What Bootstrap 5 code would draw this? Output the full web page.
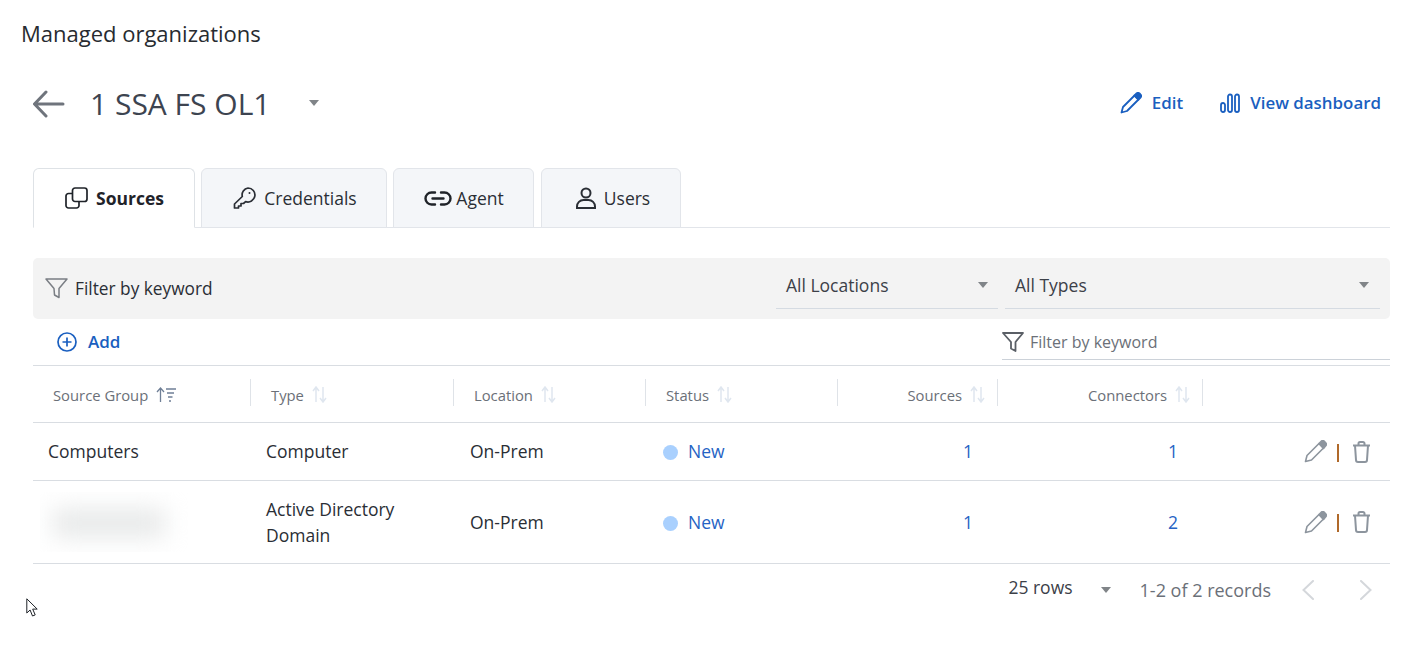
<!DOCTYPE html>
<html lang="en">
<head>
<meta charset="utf-8">
<title>Managed organizations</title>
<link href="https://cdn.jsdelivr.net/npm/bootstrap@5.3.0/dist/css/bootstrap.min.css" rel="stylesheet">
<style>
html,body{height:655px;overflow:hidden;background:#fff}
body{font-family:"Open Sans","Noto Sans",sans-serif;color:#2a2e35;font-size:17.5px;position:relative}
.page-head{font-size:22px;line-height:30px;padding:18px 0 0 21px;color:#272b30}
.wrap{padding:0 35px 0 33px}
.org-bar{height:60px;margin-top:26px}
.org-name{font-size:30px;line-height:40px;color:#3d4450;margin-left:25px}
.tri{width:0;height:0;border-left:5.5px solid transparent;border-right:5.5px solid transparent;border-top:6px solid #808488;display:inline-block}
.org-tri{margin-left:39px;margin-bottom:3px}
.act{color:#1a5fc0;font-weight:600;font-size:16.9px;text-decoration:none;line-height:24px}
.act-edit{margin-left:10px}
.act-view{margin-left:10px}
.act-chart{margin-left:37px}
.act-box{padding-right:9px;padding-bottom:2px}
.tabs-x{margin-top:34px;height:60px;gap:6px;border-bottom:1px solid #e2e5ea;flex-wrap:nowrap}
.tabs-x .nav-link{height:60px;margin-bottom:-1px;border:1px solid #e2e5ea;border-radius:6px 6px 0 0;background:#f4f6f9;color:#2a2e35;font-size:17.5px;padding:0;display:flex;align-items:center;justify-content:center;gap:8px}
.tabs-x .nav-link.active{background:#fff;border-bottom-color:#fff;font-weight:700;color:#1f2329}
.t1{width:162px}.t2{width:186px}.t3{width:141px}.t4{width:140px;margin-left:1px}
.t1 .nav-link{padding-left:1px}.t2 .nav-link{padding-left:2px}.t3 .nav-link{gap:4px;padding-left:1px}.t4 .nav-link{padding-left:4px}
.filter-band{background:#f3f3f3;height:61px;margin-top:30px;border-radius:5px;padding:0 10px 0 12px}
.band-label{font-size:17.3px;margin-left:7px;color:#2a2e35}
.pick{height:46px;border-bottom:1px solid #d5dbe2;padding:0 11px 1px 10px;color:#3c4048;font-size:17.5px;margin-bottom:5px}
.pick-a{width:222px;margin-right:7px;padding-right:10px}
.pick-b{width:375px}
.tool-row{height:46px;padding-left:24px}
.add-link{color:#1a5fc0;font-weight:600;font-size:17px;text-decoration:none;margin-left:11px}
.kw{width:388px;height:37px;border-bottom:1px solid #ccd2d9;color:#6b7078;font-size:16px;align-self:flex-start;margin-top:4px;padding-top:2px}
.kw span{margin-left:6px}
.grid-t{table-layout:fixed;width:1357px;margin:0;border-top:1px solid #d9dde2}
.grid-t>*>*>*{border-bottom:1px solid #d9dde2;padding:0;vertical-align:middle;color:#2a2e35;font-size:17.5px;line-height:26px;background:transparent}
.grid-t thead th{height:57px;font-weight:400;font-size:14.8px;color:#6b7078;position:relative;padding-left:21px;padding-top:9px}
.grid-t thead th:first-child{padding-left:20px}
.grid-t thead th.has-line::after{content:"";position:absolute;right:-1px;top:13px;height:27px;width:1px;background:#dfe3e8}
.grid-t thead th.num{text-align:right;padding-right:12px}
.grid-t tbody td.num{text-align:right;padding-right:24px;color:#2563c4}
.grid-t .r1 td{height:58px;vertical-align:top;padding-top:15px}
.grid-t .r1 td.ac-td{padding-top:17px}
.r2 td{height:83px}
.grid-t td.c1{padding-left:15px}.grid-t td.c2{padding-left:16px}.grid-t td.c3{padding-left:17px}.grid-t td.c4{padding-left:18px}
.dot-new{width:15px;height:15px;border-radius:50%;background:#a9d0fe;display:inline-block;margin-right:10px;vertical-align:-2px}
.new-t{color:#2563c4}
.blur-clip{width:148px;height:60px;overflow:hidden;margin-left:-1px;background:#fff}
.blur-in{width:112px;height:28px;margin:17px 0 0 13px;background:#e6e8e8;filter:blur(12px)}
.sep-line{width:2px;height:18px;background:#b0692a;margin:2px 13px 0 10px}
.act-cell{padding-right:11px}
.pager{height:52px;padding-right:18px}
.rows-t{color:#3c4048;font-size:17.5px;position:relative;top:-3px}
.rec-t{color:#6b7078;font-size:18px;margin:0 31px 0 29px}
.pg-tri{margin-left:28px}
.pg-next{margin-left:46px}
.ptr{position:absolute;left:26px;top:598px}
svg{display:block;flex:none}
</style>
</head>
<body>
<div class="page-head">Managed organizations</div>
<div class="wrap">
  <div class="org-bar d-flex align-items-center justify-content-between">
    <div class="d-flex align-items-center">
      <svg width="32" height="28" viewBox="0 0 32 28" fill="none" stroke="#6f747c" stroke-width="3" stroke-linecap="round" stroke-linejoin="round"><path d="M30 14H2M13 2 1.500 14 13 26"/></svg>
      <span class="org-name">1 SSA FS OL1</span>
      <span class="tri org-tri"></span>
    </div>
    <div class="d-flex align-items-center act-box">
      <svg width="22" height="22" viewBox="0 0 22 22" fill="none" stroke="#1a5fc0" stroke-width="1.800" stroke-linejoin="round"><path d="M1.500 20.500 3 15 14.500 3.500l4 4L7 19z"/><path d="M14.500 3.500 16.500 1.500a2 2 0 0 1 3 0l1 1a2 2 0 0 1 0 3l-2 2z" fill="#1a5fc0"/></svg>
      <a class="act act-edit" href="#">Edit</a>
      <svg class="act-chart" width="20" height="20" viewBox="0 0 20 20" fill="none" stroke="#1a5fc0" stroke-width="1.800"><rect x="1" y="10" width="4" height="9" rx="2"/><rect x="8" y="1.500" width="4" height="17.500" rx="2"/><rect x="15" y="1.500" width="4" height="17.500" rx="2"/></svg>
      <a class="act act-view" href="#">View dashboard</a>
    </div>
  </div>

  <ul class="nav nav-tabs tabs-x">
    <li class="nav-item t1"><a class="nav-link active" href="#">
      <svg width="23" height="22" viewBox="0 0 23 22" fill="none" stroke="#1f2329" stroke-width="1.700"><rect x="7.500" y="1" width="14.500" height="13.500" rx="2.500"/><path d="M7.500 6.500H3.500A2.500 2.500 0 0 0 1 9v9.500A2.500 2.500 0 0 0 3.500 21h8a2.500 2.500 0 0 0 2.500-2.500v-4"/></svg>Sources</a></li>
    <li class="nav-item t2"><a class="nav-link" href="#">
      <svg width="23" height="22" viewBox="0 0 23 22" fill="none" stroke="#2a2e35" stroke-width="1.700" stroke-linejoin="round"><path d="M15 1a7 7 0 1 1-2.400 13.600L10.500 16.500H8v2.500H5.500v2H1.500v-4l7.800-7.500A7 7 0 0 1 15 1z"/><circle cx="16.500" cy="6" r="1" fill="#2a2e35" stroke="none"/></svg>Credentials</a></li>
    <li class="nav-item t3"><a class="nav-link" href="#">
      <svg width="28" height="15" viewBox="0 0 28 15" fill="none" stroke="#1f2329" stroke-width="2.400" stroke-linecap="round"><path d="M11 1.500H7.500a6 6 0 0 0 0 12H11M17 1.500h3.500a6 6 0 0 1 0 12H17M8.500 7.500h11"/></svg>Agent</a></li>
    <li class="nav-item t4"><a class="nav-link" href="#">
      <svg width="20" height="22" viewBox="0 0 20 22" fill="none" stroke="#2a2e35" stroke-width="2"><circle cx="10" cy="6" r="4.500"/><path d="M1 21v-1.500A6.500 6.500 0 0 1 7.500 13h5a6.500 6.500 0 0 1 6.500 6.500V21z"/></svg>Users</a></li>
  </ul>

  <div class="filter-band d-flex align-items-center justify-content-between">
    <div class="d-flex align-items-center">
      <svg width="23" height="21" viewBox="0 0 23 21" fill="none" stroke="#7a7e84" stroke-width="1.500" stroke-linejoin="round"><path d="M1 1h21l-8 9.500v9l-4.500-2.500 -.500-6.500z"/></svg>
      <span class="band-label">Filter by keyword</span>
    </div>
    <div class="d-flex">
      <div class="pick pick-a d-flex align-items-center justify-content-between"><span>All Locations</span><span class="tri"></span></div>
      <div class="pick pick-b d-flex align-items-center justify-content-between"><span>All Types</span><span class="tri"></span></div>
    </div>
  </div>

  <div class="tool-row d-flex align-items-center justify-content-between">
    <div class="d-flex align-items-center">
      <svg width="20" height="20" viewBox="0 0 20 20" fill="none" stroke="#1a5fc0" stroke-width="1.700"><circle cx="10" cy="10" r="9"/><path d="M10 5.500v9M5.500 10h9"/></svg>
      <a class="add-link" href="#">Add</a>
    </div>
    <div class="kw d-flex align-items-center">
      <svg width="22" height="20" viewBox="0 0 22 20" fill="none" stroke="#5a5f66" stroke-width="1.800" stroke-linejoin="round"><path d="M1 1h20l-7.500 9v9l-4.500-2.500V10z"/></svg>
      <span>Filter by keyword</span>
    </div>
  </div>

  <table class="table grid-t">
    <colgroup><col style="width:217px"><col style="width:203px"><col style="width:192px"><col style="width:192px"><col style="width:160px"><col style="width:205px"><col style="width:188px"></colgroup>
    <thead>
      <tr>
        <th class="has-line"><span class="d-inline-flex align-items-center gap-2">Source Group
          <svg width="20" height="16" viewBox="0 0 20 16" fill="none" stroke="#6f7f96" stroke-width="1.300"><path d="M4.500 15V1.500M1 5l3.500-4L8 5"/><path d="M10 2h10M11 6h7M12 10h4.500M13 14h2"/></svg></span></th>
        <th class="has-line"><span class="d-inline-flex align-items-center gap-2">Type
          <svg width="15" height="17" viewBox="0 0 15 17" fill="none" stroke="#dfe6ef" stroke-width="1.500"><path d="M4 16V1.500M1 5l3-4 3 4M11 1v14.500M8 12l3 4 3-4"/></svg></span></th>
        <th class="has-line"><span class="d-inline-flex align-items-center gap-2">Location
          <svg width="15" height="17" viewBox="0 0 15 17" fill="none" stroke="#dfe6ef" stroke-width="1.500"><path d="M4 16V1.500M1 5l3-4 3 4M11 1v14.500M8 12l3 4 3-4"/></svg></span></th>
        <th class="has-line"><span class="d-inline-flex align-items-center gap-2">Status
          <svg width="15" height="17" viewBox="0 0 15 17" fill="none" stroke="#dfe6ef" stroke-width="1.500"><path d="M4 16V1.500M1 5l3-4 3 4M11 1v14.500M8 12l3 4 3-4"/></svg></span></th>
        <th class="has-line num"><span class="d-inline-flex align-items-center gap-2">Sources
          <svg width="15" height="17" viewBox="0 0 15 17" fill="none" stroke="#dfe6ef" stroke-width="1.500"><path d="M4 16V1.500M1 5l3-4 3 4M11 1v14.500M8 12l3 4 3-4"/></svg></span></th>
        <th class="has-line num"><span class="d-inline-flex align-items-center gap-2">Connectors
          <svg width="15" height="17" viewBox="0 0 15 17" fill="none" stroke="#dfe6ef" stroke-width="1.500"><path d="M4 16V1.500M1 5l3-4 3 4M11 1v14.500M8 12l3 4 3-4"/></svg></span></th>
        <th></th>
      </tr>
    </thead>
    <tbody>
      <tr class="r1">
        <td class="c1">Computers</td><td class="c2">Computer</td><td class="c3">On-Prem</td>
        <td class="c4"><span class="dot-new"></span><span class="new-t">New</span></td>
        <td class="num">1</td><td class="num">1</td>
        <td class="ac-td"><div class="d-flex align-items-center justify-content-end act-cell">
          <svg width="23" height="23" viewBox="0 0 23 23" fill="none" stroke="#8d959e" stroke-width="1.600" stroke-linejoin="round"><path d="M1.500 21.500 3 15.500 15 3.500l4.500 4.500L7.500 20z"/><path d="M15 3.500l2-2a2.500 2.500 0 0 1 3.500 0l1 1a2.500 2.500 0 0 1 0 3.500l-2 2.500z" fill="#8d959e"/></svg>
          <span class="sep-line"></span>
          <svg width="19" height="22" viewBox="0 0 19 22" fill="none" stroke="#8d959e" stroke-width="2"><path d="M1 4.500h17M6.500 4.500V2.500a1.500 1.500 0 0 1 1.500-1.500h3a1.500 1.500 0 0 1 1.500 1.500v2M3 4.500l1 14.500a2 2 0 0 0 2 2h7a2 2 0 0 0 2-2l1-14.500"/></svg>
        </div></td>
      </tr>
      <tr class="r2">
        <td><div class="blur-clip"><div class="blur-in"></div></div></td>
        <td class="c2">Active Directory<br>Domain</td><td class="c3">On-Prem</td>
        <td class="c4"><span class="dot-new"></span><span class="new-t">New</span></td>
        <td class="num">1</td><td class="num">2</td>
        <td><div class="d-flex align-items-center justify-content-end act-cell">
          <svg width="23" height="23" viewBox="0 0 23 23" fill="none" stroke="#8d959e" stroke-width="1.600" stroke-linejoin="round"><path d="M1.500 21.500 3 15.500 15 3.500l4.500 4.500L7.500 20z"/><path d="M15 3.500l2-2a2.500 2.500 0 0 1 3.500 0l1 1a2.500 2.500 0 0 1 0 3.500l-2 2.500z" fill="#8d959e"/></svg>
          <span class="sep-line"></span>
          <svg width="19" height="22" viewBox="0 0 19 22" fill="none" stroke="#8d959e" stroke-width="2"><path d="M1 4.500h17M6.500 4.500V2.500a1.500 1.500 0 0 1 1.500-1.500h3a1.500 1.500 0 0 1 1.500 1.500v2M3 4.500l1 14.500a2 2 0 0 0 2 2h7a2 2 0 0 0 2-2l1-14.500"/></svg>
        </div></td>
      </tr>
    </tbody>
  </table>

  <div class="pager d-flex align-items-center justify-content-end">
    <span class="rows-t">25 rows</span>
    <span class="tri pg-tri"></span>
    <span class="rec-t">1-2 of 2 records</span>
    <svg width="12" height="20" viewBox="0 0 12 20" fill="none" stroke="#d4d7db" stroke-width="2" stroke-linecap="round"><path d="M11 1 1.500 10 11 19"/></svg>
    <svg class="pg-next" width="12" height="20" viewBox="0 0 12 20" fill="none" stroke="#d4d7db" stroke-width="2" stroke-linecap="round"><path d="M1 1l9.500 9L1 19"/></svg>
  </div>
</div>
<svg class="ptr" width="13" height="20" viewBox="0 0 13 20" fill="#fff" stroke="#1f2329" stroke-width="1"><path d="M.800.800V15l3.300-3 2.400 6 2.700-1.100-2.500-5.800h4.500z"/></svg>
</body>
</html>
